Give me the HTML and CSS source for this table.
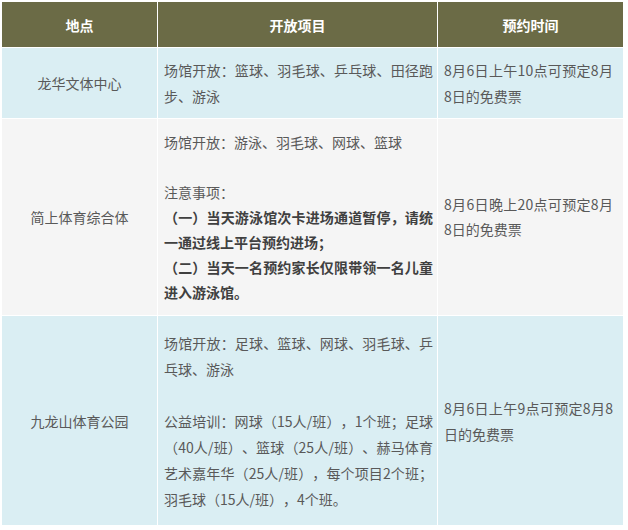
FILE: index.html
```html
<!DOCTYPE html>
<html lang="zh-CN">
<head>
<meta charset="utf-8">
<title>场馆预约</title>
<link rel="stylesheet" href="styles.css">
</head>
<body>
<div class="wrap">
  <div class="grid">
    <div class="cell head">地点</div>
    <div class="cell head">开放项目</div>
    <div class="cell head">预约时间</div>

    <div class="cell name blue r1">龙华文体中心</div>
    <div class="cell items blue r1">
      <p>场馆开放：篮球、羽毛球、乒乓球、田径跑步、游泳</p>
    </div>
    <div class="cell time blue r1">8月6日上午10点可预定8月8日的免费票</div>

    <div class="cell name grey r2">简上体育综合体</div>
    <div class="cell items grey r2">
      <p>场馆开放：游泳、羽毛球、网球、篮球</p>
      <p class="blank"></p>
      <p>注意事项：</p>
      <p class="strong">（一）当天游泳馆次卡进场通道暂停，请统一通过线上平台预约进场；</p>
      <p class="strong">（二）当天一名预约家长仅限带领一名儿童进入游泳馆。</p>
    </div>
    <div class="cell time grey r2">8月6日晚上20点可预定8月8日的免费票</div>

    <div class="cell name blue r3">九龙山体育公园</div>
    <div class="cell items blue r3">
      <p>场馆开放：足球、篮球、网球、羽毛球、乒乓球、游泳</p>
      <p class="blank"></p>
      <p>公益培训：网球（15人/班），1个班；足球（40人/班）、篮球（25人/班）、赫马体育艺术嘉年华（25人/班），每个项目2个班；羽毛球（15人/班），4个班。</p>
    </div>
    <div class="cell time blue r3">8月6日上午9点可预定8月8日的免费票</div>
  </div>
</div>
</body>
</html>
```

FILE: styles.css
```css
html, body {
  margin: 0;
  padding: 0;
  background: #ffffff;
}

body {
  font-family: "Noto Sans CJK SC", "Microsoft YaHei", sans-serif;
  font-size: 14px;
  color: #595959;
  text-spacing-trim: space-all;
}

.wrap {
  padding: 2px 0 0 2px;
}

.grid {
  display: grid;
  grid-template-columns: 155px 279px 185px;
  grid-template-rows: 45px 70px 196px 209px;
  gap: 1px;
  background: #ffffff;
  width: 621px;
}

.cell {
  display: flex;
  flex-direction: column;
  justify-content: center;
  box-sizing: border-box;
  line-height: 26px;
}

.cell p {
  margin: 0;
}

.head {
  background: #6b6b46;
  color: #ffffff;
  font-weight: bold;
  align-items: center;
  text-align: center;
}

.blue {
  background: #daeef3;
}

.grey {
  background: #f5f5f5;
}

.r2 {
  line-height: 25px;
}

.name {
  align-items: center;
  text-align: center;
}

.items {
  padding: 0 4px 0 6px;
  text-align: justify;
}

.time {
  justify-content: center;
  padding: 0 10px 0 6px;
  text-align: justify;
}

.blank {
  height: 26px;
}

.r2 .blank {
  height: 25px;
}

.strong {
  font-weight: bold;
  color: #404040;
}
```
